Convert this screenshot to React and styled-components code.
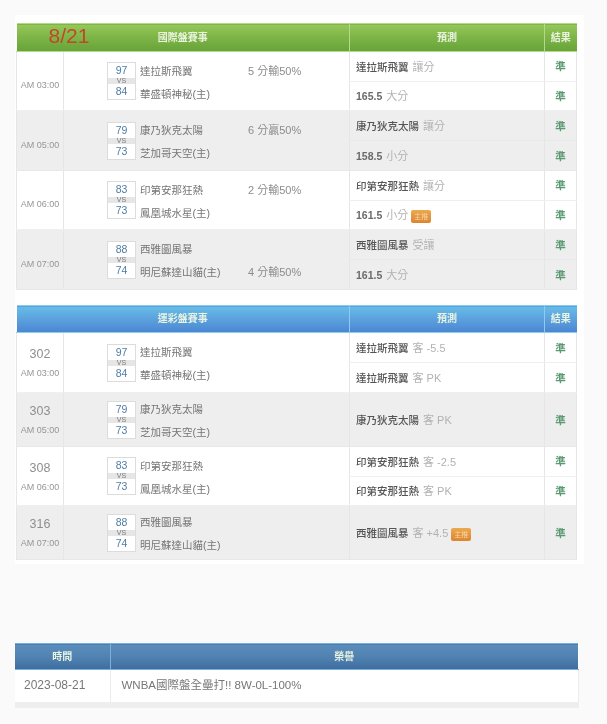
import React from 'react';
import styled, { createGlobalStyle } from 'styled-components';

const GlobalStyle = createGlobalStyle`
  html, body {
    margin: 0;
    background: #fafafa;
  }
  body {
    font-family: "Liberation Sans", "Noto Sans CJK TC", sans-serif;
    color: #666;
  }
`;

const Page = styled.div`
  width: 607px;
  height: 724px;
  overflow: hidden;
  padding-top: 15px;
  box-sizing: border-box;
  filter: blur(0.6px);
`;

const Panel = styled.div`
  width: 569px;
  margin-left: 15px;
  padding: 8px 0 4px 1px;
  box-sizing: border-box;
  background: #fff;
  display: flex;
  flex-direction: column;
  gap: 15px;
`;

const GameTable = styled.table`
  width: 560px;
  table-layout: fixed;
  border-collapse: collapse;
`;

const Head = styled.th`
  position: relative;
  box-sizing: border-box;
  height: ${p => p.$h || 28}px;
  padding: 0;
  font-size: 10px;
  line-height: 14px;
  font-weight: bold;
  color: #e9f3e0;
  text-align: center;
  border-left: 1px solid ${p => p.$line};
  border-top: 1px solid ${p => p.$line};
  border-bottom: 1px solid ${p => p.$line};
  background: ${p => p.$bg};
  &:first-child { border-left: 0; }
`;

const DateMark = styled.span`
  position: absolute;
  left: 32px;
  top: 0;
  font-size: 21px;
  line-height: 23px;
  font-weight: normal;
  color: #c0472a;
`;

const Row = styled.tr`
  background: ${p => p.$alt ? '#eeeeee' : '#fff'};
`;

const Cell = styled.td`
  box-sizing: border-box;
  padding: 0;
  height: ${p => p.$h}px;
  line-height: 14px;
  border: 1px solid ${p => p.$alt ? '#e8e8e8' : '#efefef'};
  border-right: 0;
  border-left: 1px solid #e6e6e6;
  &:last-child { border-right: 1px solid #e6e6e6; }
`;

const TimeCell = styled(Cell)`
  text-align: center;
  padding-top: ${p => p.$offset}px;
`;

const GameNo = styled.div`
  font-size: 12.5px;
  line-height: 14px;
  color: #8f8f8f;
  margin-bottom: 6px;
`;

const TimeText = styled.div`
  font-size: 9px;
  line-height: 12px;
  color: #969696;
`;

const Game = styled.div`
  display: flex;
  align-items: center;
  gap: 4px;
  padding-left: 43px;
`;

const ScoreBox = styled.div`
  width: 27px;
  border: 1px solid #dcdcdc;
  background: #fff;
  text-align: center;
  flex: none;
`;

const Score = styled.div`
  font-size: 10.5px;
  line-height: 15px;
  height: 15px;
  color: #4f7da3;
`;

const Versus = styled.div`
  font-size: 7px;
  line-height: 6px;
  height: 6px;
  color: #777;
  background: #e6e6e6;
`;

const Teams = styled.div`
  display: flex;
  flex-direction: column;
  gap: 6px;
  padding-top: 3px;
`;

const TeamLine = styled.div`
  display: flex;
  font-size: 10.5px;
  line-height: 17px;
  height: 17px;
  color: #757575;
`;

const TeamName = styled.span`
  width: 108px;
  white-space: nowrap;
`;

const Spread = styled.span`
  font-size: 11px;
  white-space: nowrap;
  color: #8c8c8c;
`;

const PickCell = styled(Cell)`
  padding: 1px 0 0 6px;
  font-size: 10.5px;
  white-space: nowrap;
`;

const PickMain = styled.span`
  font-weight: ${p => p.$strong ? 'bold' : 500};
  color: ${p => p.$strong ? '#6a6a6a' : '#555'};
`;

const PickNote = styled.span`
  margin-left: 4px;
  font-size: 11px;
  color: #b2b2b2;
`;

const Badge = styled.span`
  display: inline-block;
  margin-left: 3px;
  padding: 0 3px;
  height: 13px;
  line-height: 13px;
  vertical-align: 0;
  font-size: 7px;
  color: #f5d9a8;
  background: linear-gradient(#eda94f, #dd8430);
  border-radius: 2px;
`;

const ResultCell = styled(Cell)`
  text-align: center;
  font-size: 10.5px;
  font-weight: bold;
  color: #5a9a72;
`;

const HonorTable = styled.table`
  width: 563px;
  margin: 79px 0 0 15px;
  table-layout: fixed;
  border-collapse: collapse;
  background: #fff;
`;

const HonorCell = styled.td`
  box-sizing: border-box;
  height: 35px;
  padding: 0 0 2px ${p => p.$pad}px;
  font-size: ${p => p.$size}px;
  line-height: 14px;
  color: #777;
  border-left: 1px solid #ececec;
  border-right: 1px solid #ececec;
  border-bottom: 6px solid #eeeeee;
  &:first-child { border-left: 0; }
`;

const GREEN = { bg: 'linear-gradient(#96c75a 0%, #7fb548 45%, #66a338 100%)', line: '#b4d98a' };
const BLUE = { bg: 'linear-gradient(#66bde8 0%, #5da3de 45%, #4a86d2 100%)', line: '#8fcbee' };
const NAVY = { bg: 'linear-gradient(#5b8dbd 0%, #4f80b0 55%, #3e6c9e 100%)', line: '#79b0d9' };

const games = [
  { top: [97, '達拉斯飛翼'], bottom: [84, '華盛頓神秘(主)'], time: 'AM 03:00', no: 302, spread: '5 分輸50%' },
  { top: [79, '康乃狄克太陽'], bottom: [73, '芝加哥天空(主)'], time: 'AM 05:00', no: 303, spread: '6 分贏50%' },
  { top: [83, '印第安那狂熱'], bottom: [73, '鳳凰城水星(主)'], time: 'AM 06:00', no: 308, spread: '2 分輸50%' },
  { top: [88, '西雅圖風暴'], bottom: [74, '明尼蘇達山貓(主)'], time: 'AM 07:00', no: 316, spread: '4 分輸50%', spreadLow: true },
];

const intlPicks = [
  [{ main: '達拉斯飛翼', note: '讓分' }, { main: '165.5', note: '大分', strong: true }],
  [{ main: '康乃狄克太陽', note: '讓分' }, { main: '158.5', note: '小分', strong: true }],
  [{ main: '印第安那狂熱', note: '讓分' }, { main: '161.5', note: '小分', badge: true, strong: true }],
  [{ main: '西雅圖風暴', note: '受讓' }, { main: '161.5', note: '大分', strong: true }],
];

const lotteryPicks = [
  [{ main: '達拉斯飛翼', note: '客 -5.5' }, { main: '達拉斯飛翼', note: '客 PK' }],
  [{ main: '康乃狄克太陽', note: '客 PK' }],
  [{ main: '印第安那狂熱', note: '客 -2.5' }, { main: '印第安那狂熱', note: '客 PK' }],
  [{ main: '西雅圖風暴', note: '客 +4.5', badge: true }],
];

const Matchup = ({ game, showSpread }) => (
  <Game>
    <ScoreBox>
      <Score>{game.top[0]}</Score>
      <Versus>VS</Versus>
      <Score>{game.bottom[0]}</Score>
    </ScoreBox>
    <Teams>
      <TeamLine>
        <TeamName>{game.top[1]}</TeamName>
        {showSpread && !game.spreadLow && <Spread>{game.spread}</Spread>}
      </TeamLine>
      <TeamLine>
        <TeamName>{game.bottom[1]}</TeamName>
        {showSpread && game.spreadLow && <Spread>{game.spread}</Spread>}
      </TeamLine>
    </Teams>
  </Game>
);

const Pick = ({ pick, h, alt, span }) => (
  <>
    <PickCell $h={h} $alt={alt} rowSpan={span}>
      <PickMain $strong={pick.strong}>{pick.main}</PickMain>
      <PickNote>{pick.note}</PickNote>
      {pick.badge && <Badge>主推</Badge>}
    </PickCell>
    <ResultCell $h={h} $alt={alt} rowSpan={span}>準</ResultCell>
  </>
);

const Board = ({ title, theme, picks, heights, showNo, date, headH }) => (
  <GameTable>
    <colgroup>
      <col width="47" />
      <col width="286" />
      <col width="195" />
      <col width="32" />
    </colgroup>
    <thead>
      <tr>
        <Head colSpan={2} $bg={theme.bg} $line={theme.line} $h={headH}>
          {date && <DateMark>{date}</DateMark>}
          {title}
        </Head>
        <Head $bg={theme.bg} $line={theme.line} $h={headH}>預測</Head>
        <Head $bg={theme.bg} $line={theme.line} $h={headH}>結果</Head>
      </tr>
    </thead>
    <tbody>
      {games.map((game, i) => {
        const alt = i % 2 === 1;
        const list = picks[i];
        const rowH = heights[i] / list.length;
        return (
          <React.Fragment key={game.no}>
            <Row $alt={alt}>
              <TimeCell $h={rowH} $alt={alt} $offset={showNo ? 1 : 8} rowSpan={list.length}>
                {showNo && <GameNo>{game.no}</GameNo>}
                <TimeText>{game.time}</TimeText>
              </TimeCell>
              <Cell $h={rowH} $alt={alt} rowSpan={list.length}>
                <Matchup game={game} showSpread={!showNo} />
              </Cell>
              <Pick pick={list[0]} h={rowH} alt={alt} />
            </Row>
            {list[1] && (
              <Row $alt={alt}>
                <Pick pick={list[1]} h={rowH} alt={alt} />
              </Row>
            )}
          </React.Fragment>
        );
      })}
    </tbody>
  </GameTable>
);

const App = () => (
  <Page>
    <GlobalStyle />
    <Panel>
      <Board
        title="國際盤賽事"
        date="8/21"
        theme={GREEN}
        picks={intlPicks}
        heights={[59, 60, 59, 60]}
      />
      <Board
        title="運彩盤賽事"
        theme={BLUE}
        picks={lotteryPicks}
        heights={[60, 54, 59, 54]}
        headH={27}
        showNo
      />
    </Panel>
    <HonorTable>
      <colgroup>
        <col width="95" />
        <col width="468" />
      </colgroup>
      <thead>
        <tr>
          <Head $bg={NAVY.bg} $line={NAVY.line} $h={26}>時間</Head>
          <Head $bg={NAVY.bg} $line={NAVY.line} $h={26}>榮譽</Head>
        </tr>
      </thead>
      <tbody>
        <tr>
          <HonorCell $pad={9} $size={12}>2023-08-21</HonorCell>
          <HonorCell $pad={11} $size={11.5}>WNBA國際盤全壘打!! 8W-0L-100%</HonorCell>
        </tr>
      </tbody>
    </HonorTable>
  </Page>
);

export default App;
